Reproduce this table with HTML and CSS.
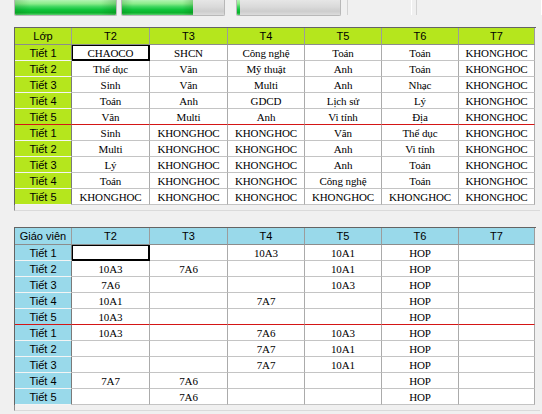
FILE: index.html
```html
<!DOCTYPE html>
<html lang="vi">
<head>
<meta charset="utf-8">
<title>Thời khóa biểu</title>
<link rel="stylesheet" href="styles.css">
</head>
<body>
<div class="status">
  <div class="bar bar1"><div class="fill" style="width:100%"></div></div>
  <div class="bar bar2"><div class="fill" style="width:70%"></div></div>
  <div class="bar bar3"><div class="fill" style="width:3px"></div></div>
  <div class="pane pane1"></div>
  <div class="pane pane2"></div>
</div>

<div class="panel">
  <div class="grid green">
    <div class="h corner">Lớp</div><div class="h">T2</div><div class="h">T3</div><div class="h">T4</div><div class="h">T5</div><div class="h">T6</div><div class="h">T7</div>

    <div class="r">Tiết 1</div><div class="c focus">CHAOCO</div><div class="c">SHCN</div><div class="c">Công nghệ</div><div class="c">Toán</div><div class="c">Toán</div><div class="c">KHONGHOC</div>
    <div class="r">Tiết 2</div><div class="c">Thể dục</div><div class="c">Văn</div><div class="c">Mỹ thuật</div><div class="c">Anh</div><div class="c">Toán</div><div class="c">KHONGHOC</div>
    <div class="r">Tiết 3</div><div class="c">Sinh</div><div class="c">Văn</div><div class="c">Multi</div><div class="c">Anh</div><div class="c">Nhạc</div><div class="c">KHONGHOC</div>
    <div class="r">Tiết 4</div><div class="c">Toán</div><div class="c">Anh</div><div class="c">GDCD</div><div class="c">Lịch sử</div><div class="c">Lý</div><div class="c">KHONGHOC</div>
    <div class="r split">Tiết 5</div><div class="c split">Văn</div><div class="c split">Multi</div><div class="c split">Anh</div><div class="c split">Vi tính</div><div class="c split">Địa</div><div class="c split">KHONGHOC</div>
    <div class="r">Tiết 1</div><div class="c">Sinh</div><div class="c">KHONGHOC</div><div class="c">KHONGHOC</div><div class="c">Văn</div><div class="c">Thể dục</div><div class="c">KHONGHOC</div>
    <div class="r">Tiết 2</div><div class="c">Multi</div><div class="c">KHONGHOC</div><div class="c">KHONGHOC</div><div class="c">Anh</div><div class="c">Vi tính</div><div class="c">KHONGHOC</div>
    <div class="r">Tiết 3</div><div class="c">Lý</div><div class="c">KHONGHOC</div><div class="c">KHONGHOC</div><div class="c">Anh</div><div class="c">Toán</div><div class="c">KHONGHOC</div>
    <div class="r">Tiết 4</div><div class="c">Toán</div><div class="c">KHONGHOC</div><div class="c">KHONGHOC</div><div class="c">Công nghệ</div><div class="c">Toán</div><div class="c">KHONGHOC</div>
    <div class="r">Tiết 5</div><div class="c">KHONGHOC</div><div class="c">KHONGHOC</div><div class="c">KHONGHOC</div><div class="c">KHONGHOC</div><div class="c">KHONGHOC</div><div class="c">KHONGHOC</div>
  </div>
</div>

<div class="panel second">
  <div class="grid blue">
    <div class="h corner">Giáo viên</div><div class="h">T2</div><div class="h">T3</div><div class="h">T4</div><div class="h">T5</div><div class="h">T6</div><div class="h">T7</div>

    <div class="r">Tiết 1</div><div class="c focus"></div><div class="c"></div><div class="c">10A3</div><div class="c">10A1</div><div class="c">HOP</div><div class="c"></div>
    <div class="r">Tiết 2</div><div class="c">10A3</div><div class="c">7A6</div><div class="c"></div><div class="c">10A1</div><div class="c">HOP</div><div class="c"></div>
    <div class="r">Tiết 3</div><div class="c">7A6</div><div class="c"></div><div class="c"></div><div class="c">10A3</div><div class="c">HOP</div><div class="c"></div>
    <div class="r">Tiết 4</div><div class="c">10A1</div><div class="c"></div><div class="c">7A7</div><div class="c"></div><div class="c">HOP</div><div class="c"></div>
    <div class="r split">Tiết 5</div><div class="c split">10A3</div><div class="c split"></div><div class="c split"></div><div class="c split"></div><div class="c split">HOP</div><div class="c split"></div>
    <div class="r">Tiết 1</div><div class="c">10A3</div><div class="c"></div><div class="c">7A6</div><div class="c">10A3</div><div class="c">HOP</div><div class="c"></div>
    <div class="r">Tiết 2</div><div class="c"></div><div class="c"></div><div class="c">7A7</div><div class="c">10A1</div><div class="c">HOP</div><div class="c"></div>
    <div class="r">Tiết 3</div><div class="c"></div><div class="c"></div><div class="c">7A7</div><div class="c">10A1</div><div class="c">HOP</div><div class="c"></div>
    <div class="r">Tiết 4</div><div class="c">7A7</div><div class="c">7A6</div><div class="c"></div><div class="c"></div><div class="c">HOP</div><div class="c"></div>
    <div class="r">Tiết 5</div><div class="c"></div><div class="c">7A6</div><div class="c"></div><div class="c"></div><div class="c">HOP</div><div class="c"></div>
  </div>
</div>
</body>
</html>
```

FILE: styles.css
```css
html, body {
  margin: 0;
  padding: 0;
  background: #f0f0f0;
}
body {
  width: 542px;
  height: 414px;
  overflow: hidden;
  font-family: "Liberation Sans", Arial, sans-serif;
}

/* status strip */
.status {
  display: flex;
  align-items: stretch;
  height: 16px;
  padding-left: 14px;
}
.bar {
  box-sizing: border-box;
  height: 16px;
  border: 1px solid #b8b8b8;
  border-top: none;
  border-radius: 0 0 2px 2px;
  background: linear-gradient(to bottom, #e6e6e6 0%, #dadada 45%, #cdcdcd 75%, #dcdcdc 100%);
  overflow: hidden;
}
.bar1 { width: 103px; }
.bar2 { width: 104px; margin-left: 4px; }
.bar3 { width: 105px; margin-left: 11px; }
.fill {
  height: 100%;
  background:
    linear-gradient(to right, rgba(0,90,0,0.18), rgba(255,255,255,0) 15%, rgba(255,255,255,0) 85%, rgba(0,90,0,0.22)),
    linear-gradient(to bottom, #b4f4b4 0%, #8aec8a 25%, #3fd660 45%, #0fc43a 65%, #0bb22c 85%, #5ed070 100%);
}
.pane {
  height: 15px;
  border-left: 1px solid #d2d2d2;
  border-right: 1px solid #ffffff;
}
.pane1 { margin-left: 6px; width: 63px; }
.pane2 { margin-left: 4px; flex: 1; }

/* grid panels */
.panel {
  box-sizing: border-box;
  margin: 11px 0 0 14px;
  width: 526px;
  height: 184px;
  border-left: 1px solid #8a8a8a;
  border-bottom: 1px solid #dadada;
  background: #f0f0f0;
}
.panel.second {
  margin-top: 16px;
}
.grid {
  display: grid;
  grid-template-columns: 57px 78px 78px 77px 77px 77px 76px;
  grid-template-rows: 17px repeat(10, 16px);
  width: 521px;
  border-top: 1px solid #646464;
  margin-left: -1px;
  border-left: 1px solid #646464;
}
.grid > div {
  box-sizing: border-box;
  display: flex;
  align-items: center;
  justify-content: center;
  white-space: nowrap;
  overflow: hidden;
}
.h, .r {
  font-family: "Liberation Sans", Arial, sans-serif;
  font-size: 11px;
  color: #000;
  border-right: 1px solid #9c9c9c;
  border-bottom: 1px solid #f4f4f4;
}
.h {
  border-bottom: 1px solid #8c8c8c;
}
.green .h, .green .r { background: #b5e61d; }
.blue .h, .blue .r { background: #99d9ea; }
.r {
  border-right: 1px solid #7a7a7a;
}
.c {
  background: #fff;
  font-family: "Liberation Serif", "Times New Roman", serif;
  font-size: 11px;
  letter-spacing: -0.1px;
  color: #000;
  border-right: 1px solid #ababab;
  border-bottom: 1px solid #c4c4c4;
}
.grid > .split {
  border-bottom: 1px solid #d41515;
}
.focus {
  box-shadow: inset 0 0 0 1px #000;
  border-right-color: #000;
  border-bottom-color: #000;
}
```
